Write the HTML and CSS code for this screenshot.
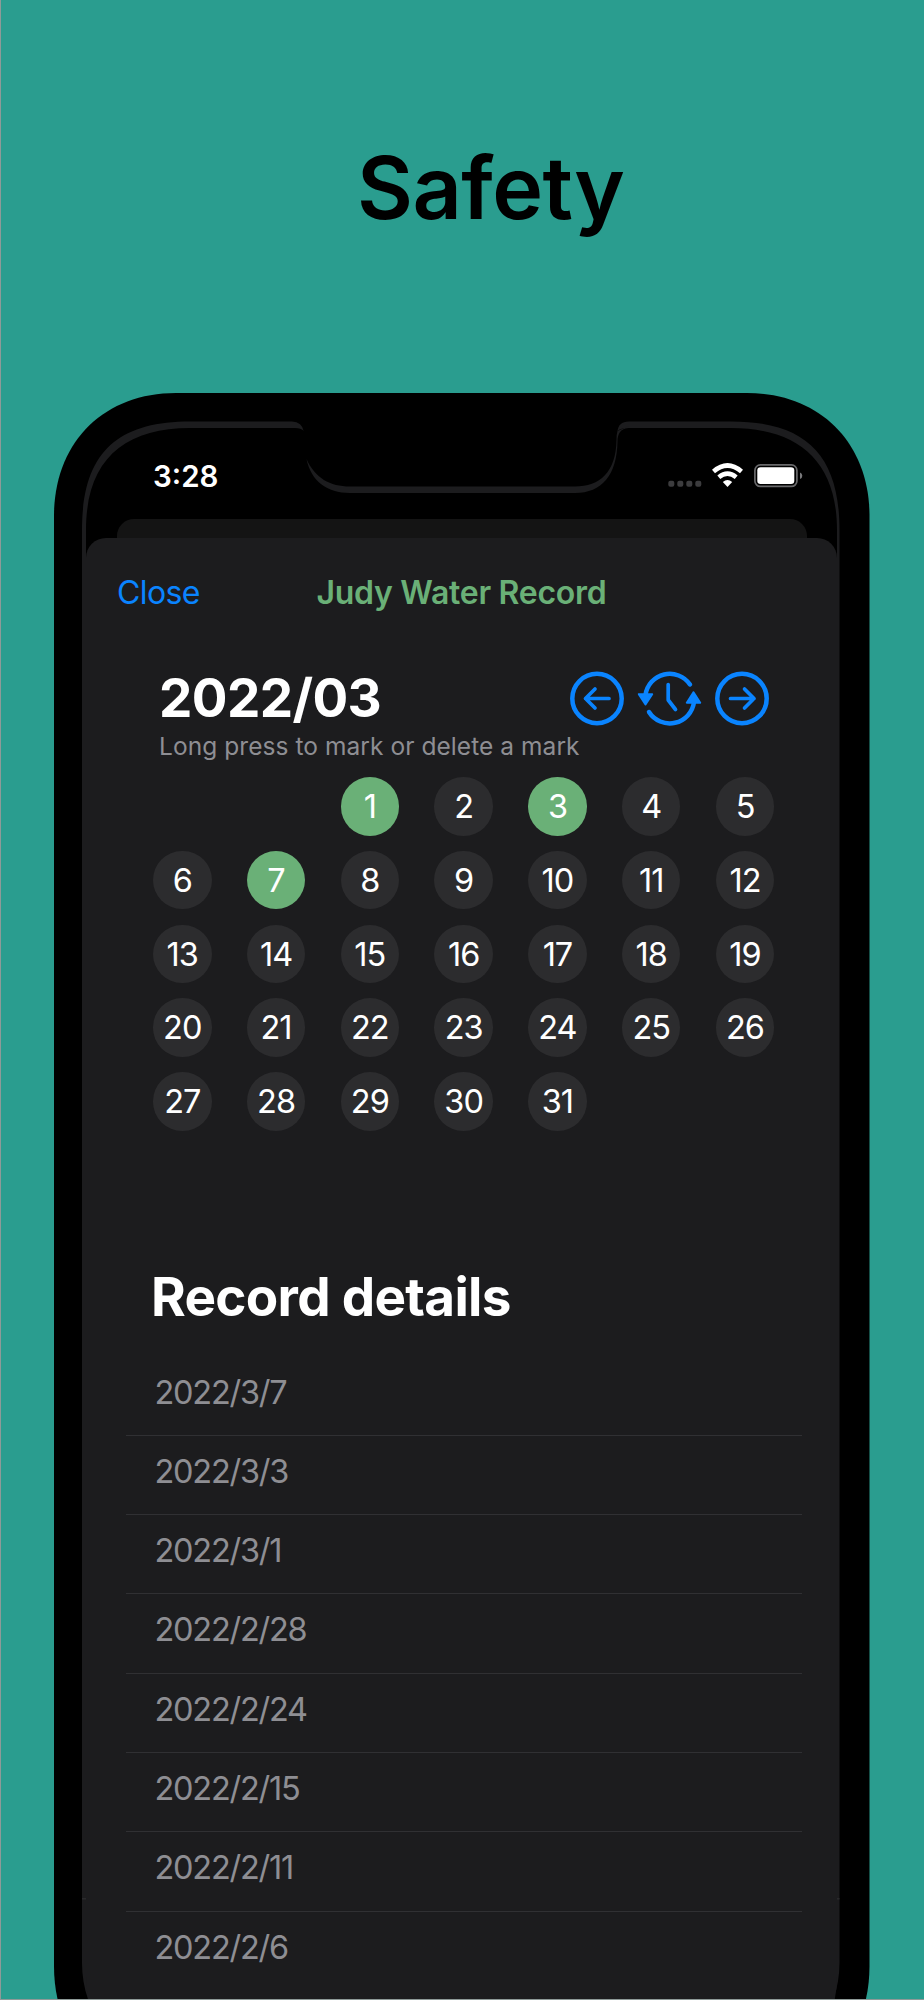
FILE: index.html
```html
<!DOCTYPE html>
<html lang="en">
<head>
    <meta charset="UTF-8">
    <meta name="viewport" content="width=device-width, initial-scale=1.0">
    <title>Judy Water Record</title>
    <link rel="stylesheet" href="styles.css">
</head>
<body>
    <div class="poster">
        <h1 class="headline">Safety</h1>

        <div class="phone">
            <!-- phone body, screen rim and notch -->
            <svg class="frame" viewBox="54 393 816 1697" width="816" height="1697">
                <path fill="#000" d="M54 516C54 443 103 393 176 393H747C820 393 869.5 443 869.5 516V1966C869.5 2040 820 2089 747 2089H176C103 2089 54 2040 54 1966Z"/>
                <path fill="#1c1c1e" d="M82 530C82 453 117 421.5 190 421.5H292Q302 421.5 304 432V440H617.5V432Q618 421.5 629 421.5H731C804 421.5 839.5 453 839.5 530V1963C839.5 2024 790 2073 731 2073H190C131 2073 82 2024 82 1963Z"/>
                <path fill="#000" d="M86 560V530C86 460 124 428 190 428H295Q301 428 304 431H617.5Q620 428 629 428H731C797 428 837 460 837 530V560Z"/>
                <path fill="#1c1c1e" d="M306.5 459C311 481 327 493 350 493H575C602 493 617 475 617.5 441C617.6 435 620 428 629 428V426L617.5 431Q616.5 434 616.5 440C616 472 600 486.5 575 486.5H350C330 486.5 315 478 306.5 459Z"/>
                <path stroke="#2a2a2c" stroke-width="1.5" d="M82 1898.7H86M837 1898.7H839.5"/>
            </svg>

            <div class="status-bar">
                <span class="clock">3:28</span>
                <svg class="status-icons" viewBox="666 460 138 30" width="138" height="30">
                    <g fill="#3c3c3e">
                        <rect x="668.3" y="480.7" width="6" height="6" rx="2"/>
                        <rect x="677.3" y="480.7" width="6" height="6" rx="2"/>
                        <rect x="686.3" y="480.7" width="6" height="6" rx="2"/>
                        <rect x="695.3" y="480.7" width="6" height="6" rx="2"/>
                    </g>
                    <path fill="none" stroke="#fff" stroke-width="4.6" d="M713.5 471.5Q727.5 459.5 741.5 471.5M718.8 477.2Q727.5 470.2 736.2 477.2"/>
                    <path fill="#fff" d="M722.8 482Q727.5 478 732.2 482L727.5 487Z"/>
                    <rect x="754.9" y="464.9" width="42" height="21.5" rx="5.5" fill="none" stroke="#69696b" stroke-width="1.7"/>
                    <rect x="757.3" y="467.3" width="37" height="16.7" rx="3.3" fill="#fff"/>
                    <path fill="#79797b" d="M800 472.5Q802.3 473.2 802.3 475.8T800 479Z"/>
                </svg>
            </div>

            <div class="back-sheet"></div>
            <div class="sheet">
                <div class="nav-bar">
                    <a class="close">Close</a>
                    <h2 class="nav-title">Judy Water Record</h2>
                </div>

                <div class="month-header">
                    <div class="month-label">
                        <div class="month">2022/03</div>
                        <div class="hint">Long press to mark or delete a mark</div>
                    </div>
                    <svg class="month-nav" viewBox="568 670 204 58" width="204" height="58">
                        <g fill="none" stroke="#0a84ff" stroke-width="4.5">
                            <circle cx="597" cy="698.5" r="24.7"/>
                            <circle cx="742" cy="698.5" r="24.7"/>
                            <g stroke-linecap="round">
                                <path d="M645.5 695A24.5 24.5 0 0 1 690 684.5"/>
                                <path d="M649 712A24.5 24.5 0 0 0 694 702"/>
                            </g>
                            <g stroke-width="3.7" stroke-linecap="round" stroke-linejoin="round">
                                <path d="M609 698.5H585.5M595 689L585.5 698.5L595 708"/>
                                <path d="M730.5 698.5H754M744.5 689L754 698.5L744.5 708"/>
                                <path d="M668.2 684.5V700L675.5 709.5"/>
                            </g>
                        </g>
                        <g fill="#0a84ff" stroke="#0a84ff" stroke-width="2" stroke-linejoin="round">
                            <path d="M638.8 694.2H652.2L645.5 704.5Z"/>
                            <path d="M686.8 702.7H700.2L693.5 692.2Z"/>
                        </g>
                    </svg>
                </div>

                <div class="calendar" id="calendar"></div>

                <h3 class="records-title">Record details</h3>
                <ul class="records">
                    <li>2022/3/7</li>
                    <li>2022/3/3</li>
                    <li>2022/3/1</li>
                    <li>2022/2/28</li>
                    <li>2022/2/24</li>
                    <li>2022/2/15</li>
                    <li>2022/2/11</li>
                    <li>2022/2/6</li>
                </ul>
            </div>
        </div>
    </div>

    <script>
        const markedDays = [1, 3, 7];
        const firstWeekday = 2; // March 2022 starts on Tuesday
        const calendar = document.getElementById('calendar');

        for (let day = 1; day <= 31; day++) {
            const cell = document.createElement('span');
            cell.className = markedDays.includes(day) ? 'day marked' : 'day';
            if (day === 1) cell.style.gridColumnStart = firstWeekday + 1;
            cell.textContent = day;
            calendar.appendChild(cell);
        }
    </script>
</body>
</html>
```
FILE: styles.css
```css
* {
    box-sizing: border-box;
}
body {
    margin: 0;
    font-family: Inter, "Liberation Sans", sans-serif;
    color: #fff;
}
h1, h2, h3, ul {
    margin: 0;
    padding: 0;
    font-weight: normal;
}
.poster {
    width: 924px;
    height: 2000px;
    overflow: hidden;
    background-color: #2a9d8f;
    border-left: 1px solid #8e9a98;
    border-bottom: 1px solid #8e9a98;
}
.headline {
    height: 393px;
    padding: 135px 0 0 356px;
    font-size: 86px;
    line-height: 106px;
    font-weight: 600;
    letter-spacing: -0.5px;
    color: #000;
}
.phone {
    position: relative;
    width: 816px;
    height: 1697px;
    margin-left: 53px;
    padding: 0 30.5px 0 28px;
}
.frame {
    position: absolute;
    left: 0;
    top: 0;
}
.status-bar, .back-sheet, .sheet {
    position: relative;
}
.status-bar {
    display: flex;
    justify-content: space-between;
    height: 125.5px;
    padding: 67px 35.5px 0 71px;
}
.clock {
    font-size: 29.5px;
    line-height: 32px;
    font-weight: 600;
}
.back-sheet {
    height: 19.5px;
    margin: 0 33px 0 35px;
    background-color: #141414;
    border-radius: 17px 17px 0 0;
}
.sheet {
    height: 1549px;
    margin: 0 2.5px 0 4px;
    background-color: #1c1c1e;
    border-radius: 20px 20px 110px 110px;
}
.nav-bar {
    display: flex;
    align-items: center;
    height: 108px;
    padding-left: 31px;
}
.close {
    width: 199.5px;
    font-size: 32px;
    letter-spacing: -0.6px;
    color: #0a84ff;
}
.nav-title {
    font-size: 32px;
    font-weight: 600;
    letter-spacing: -0.28px;
    color: #6ab077;
}
.month-header {
    display: flex;
    justify-content: space-between;
    height: 131px;
    padding: 24px 65px 0 73px;
}
.month-label {
    width: 400px;
}
.month {
    height: 60px;
    font-size: 53px;
    line-height: 57px;
    font-weight: 700;
    letter-spacing: -0.6px;
}
.hint {
    font-size: 24.5px;
    line-height: 32px;
    letter-spacing: 0.06px;
    white-space: nowrap;
    color: #8e8e93;
}
.calendar {
    display: grid;
    grid-template-columns: repeat(7, 58.5px);
    column-gap: 35.3px;
    row-gap: 15.3px;
    padding-left: 67px;
    height: 462.5px;
    align-content: start;
}
.day {
    height: 58.5px;
    border-radius: 50%;
    background-color: #2c2c2e;
    font-size: 32.5px;
    line-height: 60px;
    letter-spacing: -1px;
    text-align: center;
}
.marked {
    background-color: #6ab077;
}
.records-title {
    height: 117px;
    padding-left: 65px;
    padding-top: 22px;
    font-size: 53px;
    line-height: 70px;
    font-weight: 700;
    letter-spacing: -0.7px;
}
.records {
    margin-left: 39.5px;
    margin-right: 35px;
    list-style: none;
}
.records li {
    height: 79.3px;
    padding-left: 29px;
    border-bottom: 1.5px solid #303033;
    font-size: 32.5px;
    line-height: 72px;
    letter-spacing: -1.25px;
    color: #8e8e93;
}
.records li:last-child {
    border-bottom: none;
}
```
